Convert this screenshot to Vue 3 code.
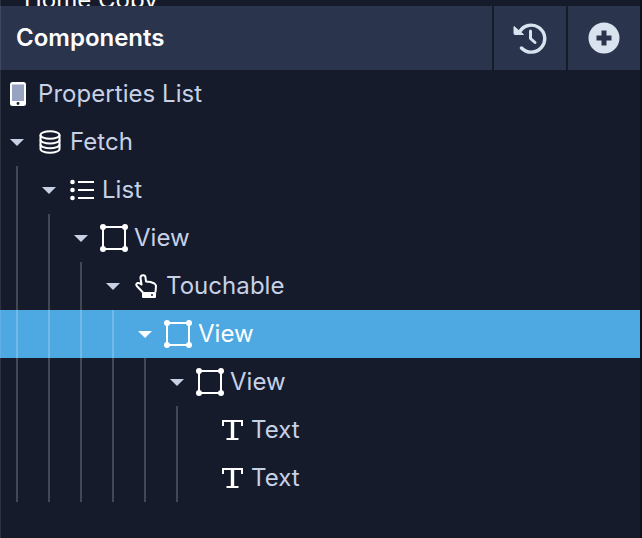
<script setup>
const rows = [
  { label: 'Properties List', icon: 'phone', depth: 0, arrow: false },
  { label: 'Fetch', icon: 'db', depth: 0, arrow: true },
  { label: 'List', icon: 'list', depth: 1, arrow: true },
  { label: 'View', icon: 'view', depth: 2, arrow: true },
  { label: 'Touchable', icon: 'touch', depth: 3, arrow: true },
  { label: 'View', icon: 'view', depth: 4, arrow: true, active: true },
  { label: 'View', icon: 'view', depth: 5, arrow: true },
  { label: 'Text', icon: 'text', depth: 6, arrow: false },
  { label: 'Text', icon: 'text', depth: 6, arrow: false }
]

// one guide per expanded row, running down from under its arrow
const guides = [0, 1, 2, 3, 4, 5]
</script>

<template>
  <div class="panel">
    <div class="clipped">Home Copy</div>
    <header class="head">
      <div class="title">Components</div>
      <button class="action">
        <svg width="34" height="34" viewBox="0 0 34 34" fill="none">
          <path d="M6.500 11A13.500 13.500 0 1 1 8.500 27" stroke="#d9e2ef" stroke-width="3.400" stroke-linecap="round"/>
          <path d="M1 5.500v7a1 1 0 0 0 1 1h8.500z" fill="#d9e2ef" stroke="#d9e2ef" stroke-linejoin="round"/>
          <path d="M17.500 10v7.500l4.500 4" stroke="#d9e2ef" stroke-width="3" stroke-linecap="round" stroke-linejoin="round"/>
        </svg>
      </button>
      <button class="action">
        <svg width="34" height="34" viewBox="0 0 34 34">
          <circle cx="17" cy="17" r="15.500" fill="#d9e2ef"/>
          <path d="M17 9.500v15M9.500 17h15" stroke="#2a344c" stroke-width="5"/>
        </svg>
      </button>
    </header>

    <div class="tree">
      <div
        v-for="(row, i) in rows"
        :key="i"
        class="row"
        :class="{ active: row.active }"
        :style="{ paddingLeft: row.depth * 32 + 'px' }"
      >
        <span v-if="row.arrow" class="arrow-slot"><span class="arrow"></span></span>
        <span class="icon" :class="'icon-' + row.icon">
          <svg v-if="row.icon === 'phone'" width="16" height="24" viewBox="0 0 16 24">
            <rect width="16" height="24" rx="2.500" fill="#fff"/>
            <rect x="2" y="2.500" width="12" height="16.500" fill="#98a3c3"/>
            <circle cx="8" cy="21.500" r="1.400" fill="#151b2b"/>
          </svg>
          <svg v-else-if="row.icon === 'db'" width="22" height="24" viewBox="0 0 22 24" fill="none" stroke="#fff" stroke-width="2">
            <ellipse cx="11" cy="5" rx="9.500" ry="3.800"/>
            <path d="M1.500 5v14c0 2.100 4.300 3.800 9.500 3.800s9.500-1.700 9.500-3.800V5"/>
            <path d="M1.500 9.700c0 2.100 4.300 3.800 9.500 3.800s9.500-1.700 9.500-3.800M1.500 14.400c0 2.100 4.300 3.800 9.500 3.800s9.500-1.700 9.500-3.800"/>
          </svg>
          <svg v-else-if="row.icon === 'list'" width="24" height="22" viewBox="0 0 24 22">
            <circle cx="2.500" cy="3" r="2.300" fill="#fff"/>
            <circle cx="2.500" cy="11" r="2.300" fill="#fff"/>
            <circle cx="2.500" cy="19" r="2.300" fill="#fff"/>
            <path d="M8 3h16M8 11h16M8 19h16" stroke="#fff" stroke-width="2"/>
          </svg>
          <svg v-else-if="row.icon === 'view'" width="28" height="28" viewBox="0 0 28 28" fill="none">
            <rect x="3" y="3" width="22" height="22" stroke="#fff" stroke-width="2"/>
            <circle cx="3" cy="3" r="3" fill="#fff"/>
            <circle cx="25" cy="3" r="3" fill="#fff"/>
            <circle cx="3" cy="25" r="3" fill="#fff"/>
            <circle cx="25" cy="25" r="3" fill="#fff"/>
          </svg>
          <svg v-else-if="row.icon === 'touch'" width="22" height="24" viewBox="0 0 22 24" fill="none">
            <path d="M8 18.500L1.800 12c-1.200-1.500 0-3.500 2-3l2.700 1.500L5.500 4c-.3-3.500 4.700-3.800 5-.5l.5 4 4.500.5 4 1.500 1.500 2-.5 7" stroke="#fff" stroke-width="2" stroke-linejoin="round"/>
            <rect x="7" y="18" width="14" height="6" rx="1" fill="#fff"/>
            <circle cx="17" cy="21" r="1" fill="#151b2b"/>
          </svg>
          <svg v-else width="21" height="24" viewBox="0 0 21 24" fill="none" stroke="#fff">
            <path d="M1 8V3h19v5" stroke-width="2"/>
            <path d="M10.500 3v18" stroke-width="3.400"/>
            <path d="M4.500 21h12" stroke-width="2"/>
          </svg>
        </span>
        <span class="label">{{ row.label }}</span>
      </div>
      <span
        v-for="g in guides"
        :key="g"
        class="guide"
        :style="{ left: 16 + g * 32 + 'px', top: 96 + g * 48 + 'px' }"
      ></span>
    </div>
  </div>
</template>

<style scoped>
.panel {
  position: relative;
  width: 640px;
  height: 538px;
  overflow: hidden;
  border-right: 2px solid #0d111d;
  background: #151b2b;
  font-family: Inter, "Liberation Sans", sans-serif;
}

.panel::before {
  content: '';
  position: absolute;
  top: 0;
  bottom: 0;
  left: 0;
  z-index: 1;
  width: 1px;
  background: rgba(255, 255, 255, 0.1);
}

.clipped {
  height: 6px;
  padding-left: 24px;
  overflow: hidden;
  color: #fff;
  font-size: 24px;
  line-height: 0;
}

.head {
  height: 64px;
  display: flex;
  align-items: stretch;
  background: #2a344c;
}

.title {
  flex: 1;
  padding-left: 16px;
  color: #fff;
  font-size: 24px;
  font-weight: 600;
  line-height: 64px;
}

.action {
  width: 74px;
  padding: 0;
  border: 0;
  border-left: 2px solid #151b2b;
  background: transparent;
  display: flex;
  align-items: center;
  justify-content: center;
}

.tree {
  position: relative;
}

.row {
  height: 48px;
  display: flex;
  align-items: center;
  color: #c7d1e6;
  font-size: 24px;
}

.row.active {
  background: #4ea8e2;
  color: #fff;
}

.label {
  padding-bottom: 1px;
  letter-spacing: 0.05px;
}

.arrow-slot {
  width: 34px;
  display: flex;
  justify-content: center;
}

.arrow {
  width: 0;
  height: 0;
  border-left: 7px solid transparent;
  border-right: 7px solid transparent;
  border-top: 7px solid #c7d1e6;
}

.row.active .arrow {
  border-top-color: #fff;
}

.icon {
  box-sizing: border-box;
  display: flex;
  align-items: center;
}

.icon svg {
  flex: none;
}

.icon-phone { width: 38px; padding-left: 10px; }
.icon-db { width: 36px; padding-left: 5px; }
.icon-list { width: 36px; padding-left: 4px; }
.icon-view { width: 36px; padding-left: 2px; }
.icon-touch { width: 36px; padding-left: 5px; }
.icon-text { width: 59px; padding-left: 30px; }

.guide {
  position: absolute;
  bottom: 0;
  width: 2px;
  background: rgba(255, 255, 255, 0.2);
}
</style>
